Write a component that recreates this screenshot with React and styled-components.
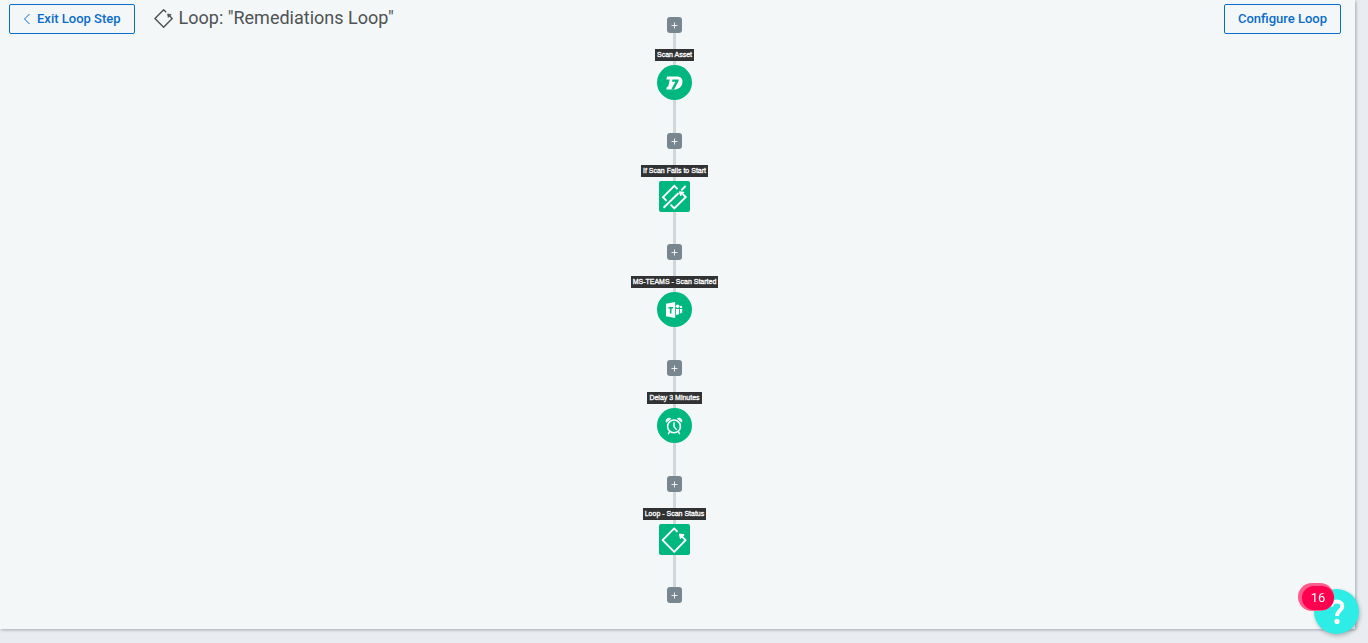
import React from "react";
import styled, { createGlobalStyle } from "styled-components";

const GlobalStyle = createGlobalStyle`
  * { box-sizing: border-box; }
  body {
    margin: 0;
    background: #e9edf1;
    color: #4f5254;
    font-family: Roboto, "Liberation Sans", sans-serif;
  }
  button { font-family: inherit; cursor: pointer; }
`;

const Page = styled.div`
  padding: 0 13px 14px 0;
`;

const Panel = styled.main`
  display: grid;
  grid-template-columns: 1fr auto 1fr;
  align-items: start;
  padding-right: 6px;
  padding-bottom: 26px;
  background: #f3f7f8;
  box-shadow: 1px 1px 3px rgba(60, 70, 80, 0.4);
`;

const ToolbarStart = styled.header`
  display: flex;
  align-items: center;
  padding: 4px 0 0 9px;
`;

const ToolbarEnd = styled.div`
  display: flex;
  justify-content: flex-end;
  padding: 4px 8px 0 0;
`;

const OutlineButton = styled.button`
  display: flex;
  align-items: center;
  gap: 6px;
  height: 30px;
  padding: 0 13px;
  border: 1px solid #0a6ccb;
  border-radius: 2px;
  background: transparent;
  color: #0a6ccb;
  font-size: 13px;
  font-weight: 500;
  line-height: 20px;
  white-space: nowrap;
`;

const Title = styled.h1`
  display: flex;
  align-items: center;
  gap: 5px;
  margin: 0 0 0 18px;
  height: 28px;
  align-self: flex-start;
  font-size: 18px;
  font-weight: 400;
  line-height: 28px;
  white-space: nowrap;
`;

const Workflow = styled.section`
  display: flex;
  flex-direction: column;
  align-items: center;
  padding-top: 17px;
`;

const Step = styled.div`
  display: flex;
  flex-direction: column;
  align-items: center;
`;

const Connector = styled.span`
  width: 3px;
  height: ${(p) => p.$length}px;
  background: #d0d6d9;
`;

const AddButton = styled.button`
  display: flex;
  align-items: center;
  justify-content: center;
  width: 15px;
  height: 16px;
  padding: 0;
  border: 0;
  border-radius: 3px;
  background: #788690;
  color: #fff;
`;

const StepLabel = styled.span`
  height: 12px;
  padding: 0 2px;
  background: #303234;
  color: #fff;
  font-family: "Liberation Sans", Arial, sans-serif;
  font-size: 7px;
  font-weight: 400;
  -webkit-text-stroke: 0.3px #fff;
  line-height: 12px;
  white-space: nowrap;
`;

const StepNode = styled.button`
  display: flex;
  align-items: center;
  justify-content: center;
  width: ${(p) => (p.$round ? 35 : 31)}px;
  height: ${(p) => (p.$round ? 35 : 31)}px;
  padding: 0;
  border: 0;
  border-radius: ${(p) => (p.$round ? "50%" : "2px")};
  background: #00b780;
  color: #fff;
`;

const HelpDock = styled.aside`
  position: fixed;
  right: 9px;
  bottom: 9px;
`;

const HelpButton = styled.button`
  display: flex;
  align-items: center;
  justify-content: center;
  width: 45px;
  height: 45px;
  padding: 0;
  border: 0;
  border-radius: 50%;
  background: #2eece6;
  color: #fff;
  box-shadow: 1px 2px 4px rgba(0, 0, 0, 0.25);
`;

const Badge = styled.span`
  position: absolute;
  top: -3px;
  left: -12px;
  width: 32px;
  height: 24px;
  border-radius: 12px;
  background: #ff0050;
  box-shadow: -2px -1px 0 2px #ff5c8c;
  clip-path: inset(-4px 0 -1px -5px);
  color: #fff;
  font-size: 13px;
  line-height: 24px;
  text-align: center;
`;

const ChevronIcon = () => (
  <svg width="8" height="12" viewBox="0 0 8 12" fill="none" stroke="currentColor" aria-hidden="true">
    <path d="M6.5 1 1.5 6l5 5" />
  </svg>
);

const LoopIcon = ({ size, weight }) => (
  <svg width={size} height={size} viewBox="0 0 28 28" fill="none" stroke="currentColor" strokeWidth={weight} aria-hidden="true">
    <path d="M17.5 5.8 14.2 2.4 2.6 14.1 14.2 25.8 25.6 14.1 22.2 10.8" strokeLinejoin="round" />
    <path d="M19.4 8 24.2 8.8 20.4 12.6Z" fill="currentColor" strokeWidth="1" />
  </svg>
);

const DecisionIcon = () => (
  <svg width="28" height="28" viewBox="0 0 28 28" fill="none" stroke="currentColor" strokeWidth="1.9" aria-hidden="true">
    <path d="M17.6 6.1 14.3 2.8 3 14.2 6.6 17.8" />
    <path d="M10.6 21.6 14.3 25.3 25.7 14.1 22.8 11.2" />
    <path d="M3.6 24.8 18.6 10" />
    <path d="M21.3 7.3 25.6 3" />
    <path d="M19.4 8.8 24 9.3 20.6 12.9Z" fill="currentColor" strokeWidth="1" />
  </svg>
);

const ScanIcon = () => (
  <svg width="17" height="14" viewBox="0 0 17 14" aria-hidden="true">
    <path d="M1 .6H10.8C14.5.6 16.7 2.8 16.5 6.1 16.2 10.3 13.2 13.4 9 13.4H.3L.9 10.7H2.2L3.8 3.4H.4Z" fill="currentColor" />
    <path d="M6.5 3.5H12.8L12.5 5.3 8 13.6H5.2L9.4 5.8H6Z" fill="#00b780" />
  </svg>
);

const TeamsIcon = () => (
  <svg width="18" height="18" viewBox="0 0 18 18" aria-hidden="true">
    <path d="M1 2.8 10.2 1V17L1 15.2Z" fill="currentColor" />
    <path d="M3.4 6H8V7.5H6.5V12.6H4.9V7.6H3.4Z" fill="#00b780" />
    <circle cx="12.6" cy="5.3" r="1.8" fill="currentColor" />
    <circle cx="16" cy="5.9" r="1.2" fill="currentColor" />
    <path d="M11 8H14.1V12.7C13.4 13.8 12.1 14.1 11 13.7Z" fill="currentColor" />
    <path d="M14.9 8H17.2V11.3C16.8 12.3 15.8 12.6 14.9 12.3Z" fill="currentColor" />
  </svg>
);

const AlarmIcon = () => (
  <svg width="18" height="18" viewBox="0 0 18 18" fill="none" stroke="currentColor" strokeWidth="1.6" strokeLinecap="round" aria-hidden="true">
    <circle cx="9" cy="9.4" r="6.4" />
    <path d="M9 5.8V9.8L11.2 12.2M4.6 14.6 3.5 16.8M13.4 14.6 14.5 16.8" strokeWidth="1.4" />
    <path d="M1.2 4.7C.4 2.4 3.2.4 5.4 1.5ZM16.8 4.7C17.6 2.4 14.8.4 12.6 1.5Z" fill="currentColor" strokeWidth="1" />
  </svg>
);

const PlusIcon = () => (
  <svg width="7" height="7" viewBox="0 0 7 7" stroke="currentColor" aria-hidden="true">
    <path d="M3.5 .5V6.5M.5 3.5H6.5" strokeOpacity="0.85" />
  </svg>
);

const QuestionIcon = () => (
  <svg width="18" height="26" viewBox="0 0 18 26" fill="none" stroke="currentColor" strokeWidth="4" aria-hidden="true">
    <path d="M3.1 7.7C3.3 4.4 5.6 2.6 8.8 2.6 12.2 2.6 14.3 4.4 14.3 7.3 14.3 11.3 9 11.6 9 17" />
    <circle cx="9" cy="22.4" r="2.6" fill="currentColor" stroke="none" />
  </svg>
);

const steps = [
  { label: "Scan Asset", round: true, icon: <ScanIcon /> },
  { label: "If Scan Fails to Start", round: false, icon: <DecisionIcon /> },
  { label: "MS-TEAMS - Scan Started", round: true, icon: <TeamsIcon /> },
  { label: "Delay 3 Minutes", round: true, icon: <AlarmIcon /> },
  { label: "Loop - Scan Status", round: false, icon: <LoopIcon size={28} weight={1.9} /> },
];

const AddStep = () => (
  <AddButton type="button" aria-label="Add step">
    <PlusIcon />
  </AddButton>
);

export default function App() {
  return (
    <>
      <GlobalStyle />
      <Page>
        <Panel>
          <ToolbarStart>
            <OutlineButton type="button">
              <ChevronIcon />
              Exit Loop Step
            </OutlineButton>
            <Title>
              <LoopIcon size={21} weight={1.9} />
              Loop: "Remediations Loop"
            </Title>
          </ToolbarStart>
          <Workflow aria-label="Loop steps">
            {steps.map((step) => (
              <Step key={step.label}>
                <AddStep />
                <Connector $length={16} />
                <StepLabel>{step.label}</StepLabel>
                <Connector $length={4} />
                <StepNode type="button" $round={step.round} aria-label={step.label}>
                  {step.icon}
                </StepNode>
                <Connector $length={step.round ? 33 : 32} />
              </Step>
            ))}
            <AddStep />
          </Workflow>
          <ToolbarEnd>
            <OutlineButton type="button">Configure Loop</OutlineButton>
          </ToolbarEnd>
        </Panel>
      </Page>
      <HelpDock>
        <HelpButton type="button" aria-label="Help">
          <QuestionIcon />
        </HelpButton>
        <Badge>16</Badge>
      </HelpDock>
    </>
  );
}
